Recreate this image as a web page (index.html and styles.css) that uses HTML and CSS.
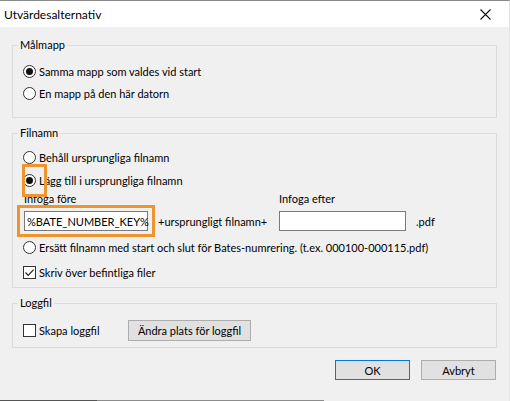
FILE: index.html
```html
<!DOCTYPE html>
<html>
<head>
<meta charset="utf-8">
<title>Utvärdesalternativ</title>
<link rel="stylesheet" href="styles.css">
</head>
<body>
<div class="window">
  <div class="titlebar">
    <span class="title">Utvärdesalternativ</span>
    <span class="close"><svg width="11" height="11" viewBox="0 0 11 11"><path d="M0.5 0.5L10.5 10.5M10.5 0.5L0.5 10.5" stroke="#111" stroke-width="1.1" fill="none"/></svg></span>
  </div>
  <div class="content">
    <fieldset class="group g1">
      <legend>Målmapp</legend>
      <label class="opt"><span class="radio on"></span>Samma mapp som valdes vid start</label>
      <label class="opt"><span class="radio"></span>En mapp på den här datorn</label>
    </fieldset>
    <fieldset class="group g2">
      <legend>Filnamn</legend>
      <label class="opt"><span class="radio"></span>Behåll ursprungliga filnamn</label>
      <label class="opt"><span class="radio on hl"></span>Lägg till i ursprungliga filnamn</label>
      <div class="insert">
        <span class="lbl lbl1">Infoga före</span>
        <span class="lbl lbl2">Infoga efter</span>
        <div class="field f1 hlbox">%BATE_NUMBER_KEY%<span class="caret"></span></div>
        <span class="plus">+ursprungligt filnamn+</span>
        <div class="field f2"></div>
        <span class="ext">.pdf</span>
      </div>
      <label class="opt o3"><span class="radio"></span>Ersätt filnamn med start och slut för Bates-numrering. (t.ex. 000100-000115.pdf)</label>
      <label class="opt o4"><span class="check on"><svg width="11" height="11" viewBox="0 0 11 11"><path d="M1.5 5.5L4.2 8.3L9.6 2.6" stroke="#222" stroke-width="1.2" fill="none"/></svg></span>Skriv över befintliga filer</label>
    </fieldset>
    <fieldset class="group g3">
      <legend>Loggfil</legend>
      <div class="logrow">
        <label class="opt logopt"><span class="check"></span>Skapa loggfil</label>
        <button class="btn logbtn">Ändra plats för loggfil</button>
      </div>
    </fieldset>
    <div class="actions">
      <button class="btn primary">OK</button>
      <button class="btn">Avbryt</button>
    </div>
  </div>
  <div class="taskline"></div>
</div>
</body>
</html>
```

FILE: styles.css
```css
* { box-sizing: border-box; }
html, body { margin: 0; padding: 0; }
body {
  width: 510px;
  height: 401px;
  overflow: hidden;
  font-family: Lato, "Segoe UI", sans-serif;
  font-size: 11px;
  color: #000;
  background: #f0f0f0;
}
.window {
  width: 510px;
  height: 401px;
  display: flex;
  flex-direction: column;
  border-top: 1px solid #8a8a8a;
  border-right: 1px solid #e2e2e2;
  background: #f0f0f0;
}
.titlebar {
  height: 26px;
  flex: none;
  background: #fff;
  display: flex;
  align-items: center;
  justify-content: space-between;
  padding: 0 18px 0 4px;
  font-size: 12px;
}
.close { display: flex; width: 11px; height: 11px; }
.content {
  flex: 1;
  display: flex;
  flex-direction: column;
  padding: 10px 12px 0 12px;
}
.group {
  margin: 0;
  min-width: 0;
  border: 1px solid #dcdcdc;
  padding: 7px 10px 13px 10px;
}
.group legend {
  padding: 0 2px;
  margin-left: -5px;
  line-height: 16px;
  height: 16px;
}
.g2 { margin-top: 7px; padding-top: 5px; padding-bottom: 4px; }
.g3 { margin-top: 7px; padding-top: 8px; padding-bottom: 5px; }
.opt {
  display: flex;
  align-items: center;
  height: 22px;
  white-space: nowrap;
}
.g2 .opt { height: 23px; }
.g2 .o3 { height: 22px; margin-top: 5px; }
.g2 .o4 { height: 22px; margin-top: 3px; }
.radio {
  position: relative;
  flex: none;
  width: 13px;
  height: 13px;
  margin-right: 3px;
  border: 1px solid #333;
  border-radius: 50%;
  background: #fff;
}
.radio.on::after {
  content: "";
  position: absolute;
  left: 2px;
  top: 2px;
  width: 7px;
  height: 7px;
  border-radius: 50%;
  background: #111;
}
.radio.hl::before {
  content: "";
  position: absolute;
  left: -2px;
  top: -11px;
  width: 19px;
  height: 27px;
  border: 3px solid #ef9530;
  z-index: 2;
}
.check {
  flex: none;
  display: flex;
  align-items: center;
  justify-content: center;
  width: 13px;
  height: 13px;
  margin-right: 3px;
  border: 1px solid #333;
  background: #fff;
}
.insert {
  display: grid;
  grid-template-columns: 125px 130px 127px auto;
  grid-template-rows: 14px 20px;
  row-gap: 5px;
  align-items: center;
  margin-left: 1px;
}
.lbl { line-height: 14px; white-space: nowrap; }
.lbl1 { grid-column: 1; grid-row: 1; }
.lbl2 { grid-column: 3; grid-row: 1; }
.field {
  height: 20px;
  border: 1px solid #7a7a7a;
  background: #fff;
  display: flex;
  align-items: center;
  padding-left: 2px;
  white-space: nowrap;
}
.f1 { grid-column: 1; grid-row: 2; width: 124px; position: relative; }
.f2 { grid-column: 3; grid-row: 2; width: 127px; }
.caret {
  display: inline-block;
  width: 1px;
  height: 14px;
  background: #000;
  margin-left: 1px;
}
.hlbox::after {
  content: "";
  position: absolute;
  left: -8px;
  top: -7px;
  right: -8px;
  bottom: -7px;
  border: 3px solid #ef9530;
}
.plus { grid-column: 2; grid-row: 2; padding-left: 9px; white-space: nowrap; }
.ext { grid-column: 4; grid-row: 2; padding-left: 10px; }
.logrow { display: flex; align-items: center; height: 23px; }
.logopt { width: 105px; }
.btn {
  font: inherit;
  color: #000;
  height: 21px;
  padding: 0 4px;
  border: 1px solid #adadad;
  background: #e1e1e1;
  line-height: 17px;
  white-space: nowrap;
}
.logbtn { width: 123px; }
.actions {
  display: flex;
  justify-content: flex-end;
  gap: 11px;
  margin-top: 12px;
  padding-right: 1px;
}
.actions .btn { width: 75px; height: 20px; }
.actions .primary { border-color: #0078d7; }
.taskline {
  height: 1px;
  flex: none;
  background: linear-gradient(to right, #555 0 97px, #8c8c8c 97px 324px, #f0f0f0 324px);
}
```
